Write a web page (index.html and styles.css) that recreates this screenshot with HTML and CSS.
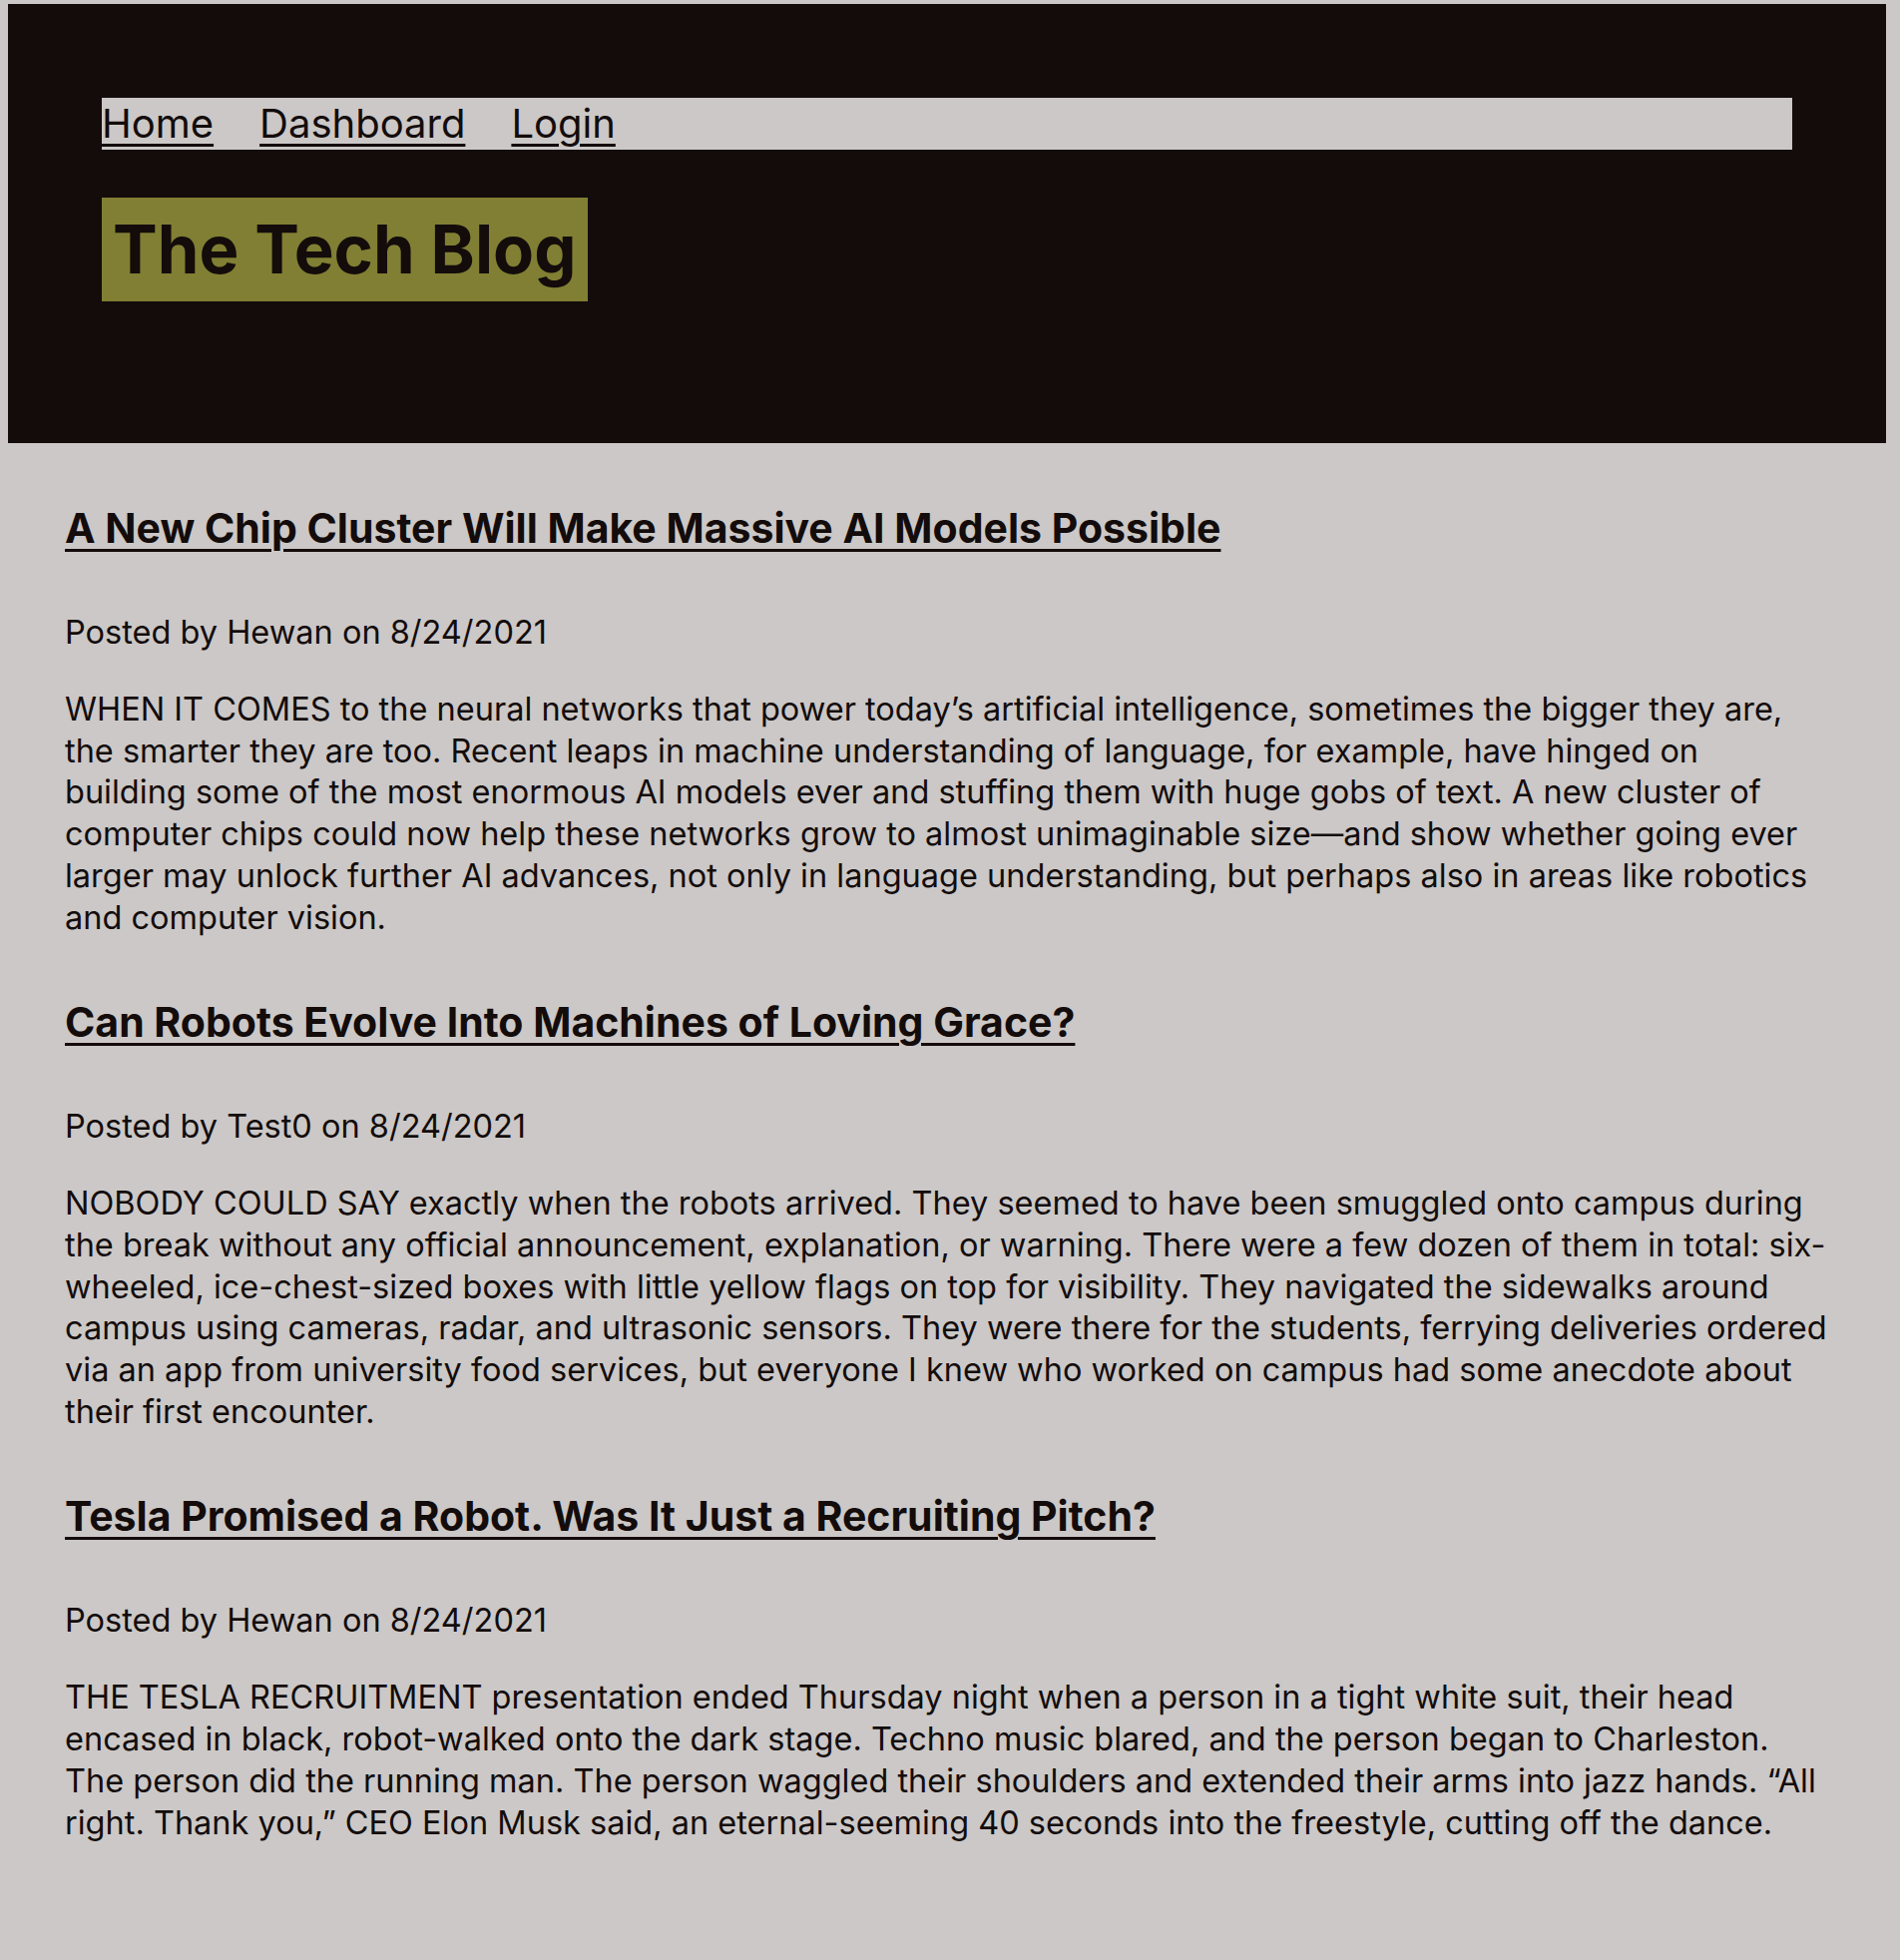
FILE: index.html
```html
<!DOCTYPE html>
<html lang="en">
<head>
<meta charset="utf-8">
<title>The Tech Blog</title>
<link rel="stylesheet" href="styles.css">
</head>
<body>
<header class="site-header">
  <nav class="nav">
    <a href="#">Home</a>
    <a href="#">Dashboard</a>
    <a href="#">Login</a>
  </nav>
  <h1 class="brand">The Tech Blog</h1>
</header>
<main class="posts">
  <article class="post">
    <h2 class="post-title"><a href="#">A New Chip Cluster Will Make Massive AI Models Possible</a></h2>
    <p class="post-meta">Posted by Hewan on 8/24/2021</p>
    <p class="post-body">WHEN IT COMES to the neural networks that power today’s artificial intelligence, sometimes the bigger they are, the smarter they are too. Recent leaps in machine understanding of language, for example, have hinged on building some of the most enormous AI models ever and stuffing them with huge gobs of text. A new cluster of computer chips could now help these networks grow to almost unimaginable size—and show whether going ever larger may unlock further AI advances, not only in language understanding, but perhaps also in areas like robotics and computer vision.</p>
  </article>
  <article class="post">
    <h2 class="post-title"><a href="#">Can Robots Evolve Into Machines of Loving Grace?</a></h2>
    <p class="post-meta">Posted by Test0 on 8/24/2021</p>
    <p class="post-body">NOBODY COULD SAY exactly when the robots arrived. They seemed to have been smuggled onto campus during the break without any official announcement, explanation, or warning. There were a few dozen of them in total: six-wheeled, ice-chest-sized boxes with little yellow flags on top for visibility. They navigated the sidewalks around campus using cameras, radar, and ultrasonic sensors. They were there for the students, ferrying deliveries ordered via an app from university food services, but everyone I knew who worked on campus had some anecdote about their first encounter.</p>
  </article>
  <article class="post">
    <h2 class="post-title"><a href="#">Tesla Promised a Robot. Was It Just a Recruiting Pitch?</a></h2>
    <p class="post-meta">Posted by Hewan on 8/24/2021</p>
    <p class="post-body">THE TESLA RECRUITMENT presentation ended Thursday night when a person in a tight white suit, their head encased in black, robot-walked onto the dark stage. Techno music blared, and the person began to Charleston. The person did the running man. The person waggled their shoulders and extended their arms into jazz hands. “All right. Thank you,” CEO Elon Musk said, an eternal-seeming 40 seconds into the freestyle, cutting off the dance.</p>
  </article>
</main>
</body>
</html>
```
FILE: styles.css
```css
html, body {
  margin: 0;
  padding: 0;
}
body {
  background: #cbc8c7;
  color: #130c0b;
  font-family: Inter, "Noto Sans", sans-serif;
}
a {
  color: #130c0b;
}
.site-header {
  background: #130c0b;
  margin: 4px 14px 0 8px;
  padding: 94px;
}
.nav {
  display: flex;
  gap: 46px;
  background: #cbc8c7;
  font-size: 40px;
  line-height: 52px;
  height: 52px;
}
.nav a {
  text-decoration: underline;
  text-decoration-thickness: 3px;
  text-underline-offset: 6px;
}
.brand {
  display: inline-block;
  margin: 48px 0;
  background: #817f33;
  font-size: 67px;
  font-weight: 700;
  line-height: 78px;
  padding: 13px 11px;
}
.posts {
  padding: 62px 72px 60px 65px;
}
.post-title {
  margin: 0;
  font-size: 41px;
  line-height: 46px;
  font-weight: 700;
}
.post-title a {
  text-decoration-thickness: 3px;
  text-underline-offset: 6px;
}
.post-meta {
  margin: 61px 0 0 0;
  font-size: 32.5px;
  line-height: 42px;
}
.post-body {
  margin: 35px 0 61px 0;
  font-size: 32.5px;
  line-height: 41.7px;
}
```
